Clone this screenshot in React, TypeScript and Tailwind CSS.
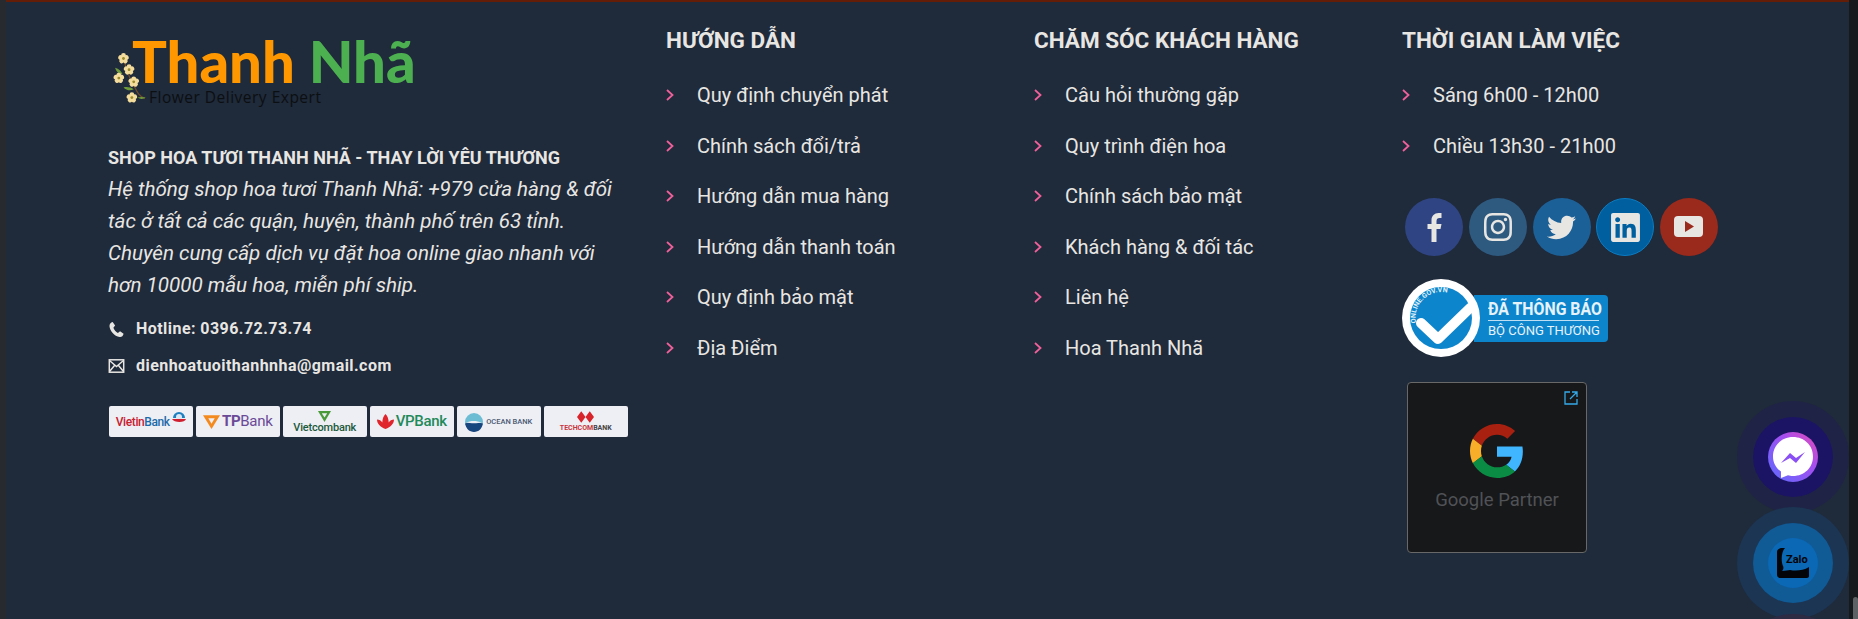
import React from 'react';
import { FaInstagram, FaTwitter, FaLinkedin } from 'react-icons/fa';

const guide = ['Quy định chuyển phát', 'Chính sách đổi/trả', 'Hướng dẫn mua hàng', 'Hướng dẫn thanh toán', 'Quy định bảo mật', 'Địa Điểm'];
const care = ['Câu hỏi thường gặp', 'Quy trình điện hoa', 'Chính sách bảo mật', 'Khách hàng & đối tác', 'Liên hệ', 'Hoa Thanh Nhã'];
const hours = ['Sáng 6h00 - 12h00', 'Chiều 13h30 - 21h00'];

function Chevron() {
  return (
    <svg width="8" height="12" viewBox="0 0 8 12" fill="none" className="shrink-0">
      <path d="M1 1l5.500 5L1 11" stroke="#f0609a" strokeWidth="1.800" />
    </svg>
  );
}

function LinkList({ items }: { items: string[] }) {
  return (
    <ul className="mt-[18px]">
      {items.map((item) => (
        <li key={item} className="flex items-center gap-[23px] h-[50.5px] text-[20px] text-[#e8e6e3]">
          <Chevron />
          <span>{item}</span>
        </li>
      ))}
    </ul>
  );
}

function Blossom({ x, y }: { x: number; y: number }) {
  return (
    <g transform={`translate(${x} ${y})`}>
      {[0, 72, 144, 216, 288].map((a) => (
        <circle key={a} cx="0" cy="-3.200" r="2.600" fill="#f3dc9c" transform={`rotate(${a})`} />
      ))}
      <circle r="1.500" fill="#9a8a2c" />
    </g>
  );
}

function Logo() {
  return (
    <div className="flex items-start h-[90px] pl-[4px]">
      <svg width="36" height="54" viewBox="0 0 36 58" className="mt-[24px] shrink-0">
        <path d="M10 6c4 8 5 18 10 26s5 14 14 18" stroke="#6e4a2a" strokeWidth="1.400" fill="none" />
        <path d="M2 17c4 1 7 4 8 7-4 0-7-3-8-7zM11 38c4-1 8 0 11 2-4 2-8 1-11-2zM26 49c3-1 6-1 9 0-3 2-6 2-9 0z" fill="#6f9a3a" />
        <Blossom x={11} y={7} />
        <Blossom x={17} y={19} />
        <Blossom x={6} y={28} />
        <Blossom x={22} y={32} />
        <Blossom x={20} y={49} />
      </svg>
      <div className="-ml-[16px] mt-[5px]">
        <div className="text-[58px] leading-[56px] font-black whitespace-nowrap [font-family:Lato,sans-serif]">
          <span className="text-[#ff9800]">Thanh</span> <span className="text-[#4caf50]">Nhã</span>
        </div>
        <div className="ml-[17px] text-[15.500px] leading-[16px] tracking-[0.5px] text-[#0c0f12] whitespace-nowrap [font-family:'Open_Sans',sans-serif]">
          Flower Delivery Expert
        </div>
      </div>
    </div>
  );
}

function BankCard({ children }: { children: React.ReactNode }) {
  return (
    <div className="w-[83.500px] h-[31px] rounded-[2px] bg-[#eeeef5] flex items-center justify-center gap-[2px] overflow-hidden whitespace-nowrap">
      {children}
    </div>
  );
}

function Banks() {
  return (
    <div className="flex gap-[3.500px] ml-[1px] mt-[28px]">
      <BankCard>
        <span className="text-[12px] tracking-[-0.4px] font-medium text-[#c8202f]">Vietin<span className="text-[#1c6aa8]">Bank</span></span>
        <svg width="14" height="16" viewBox="0 0 14 16" className="-mt-[6px]">
          <path d="M1 7a6 6 0 0 1 12 0z" fill="#1c7fc0" />
          <circle cx="7" cy="6" r="3" fill="#dbe8f3" />
          <path d="M0 8h14c-1 4-12 4-14 0z" fill="#d01f2e" />
        </svg>
      </BankCard>
      <BankCard>
        <svg width="17" height="15" viewBox="0 0 16 14">
          <path d="M0 1h16L8 14z" fill="#f48a1e" />
          <path d="M5 4h6l-3 5z" fill="#eeeef5" />
        </svg>
        <span className="text-[15px] tracking-[-0.3px] text-[#6a4a96]"><span className="font-bold">TP</span>Bank</span>
      </BankCard>
      <BankCard>
        <div className="flex flex-col items-center">
          <svg width="13" height="11" viewBox="0 0 12 10">
            <path d="M0 0h12L6 10z" fill="#4b9a3a" />
            <path d="M3.500 2h5L6 6z" fill="#eeeef5" />
          </svg>
          <span className="text-[11px] leading-[11px] tracking-[-0.2px] font-medium text-[#1d5a3a]">Vietcombank</span>
        </div>
      </BankCard>
      <BankCard>
        <svg width="17" height="15" viewBox="0 0 16 14">
          <path d="M8 14C3 12 0 9 0 5c2 0 4 1 5 3 0-3 1-6 3-8 2 2 3 5 3 8 1-2 3-3 5-3 0 4-3 7-8 9z" fill="#e0252c" />
        </svg>
        <span className="text-[15px] tracking-[-0.3px] font-medium text-[#1f8a5a]">VPBank</span>
      </BankCard>
      <BankCard>
        <svg width="18" height="20" viewBox="0 0 17 19">
          <circle cx="8.500" cy="9.500" r="8.500" fill="#6cbcd4" />
          <path d="M0 11c4-2 11-2 17 0-1 5-4 8-8.500 8S1 16 0 11z" fill="#17457e" />
          <path d="M1 10c4-2 10-2 15 0-4 1-11 1-15 0z" fill="#eeeef5" />
        </svg>
        <span className="text-[7.500px] font-medium text-[#4a5a72] ml-[1px]">OCEAN BANK</span>
      </BankCard>
      <BankCard>
        <div className="flex flex-col items-center">
          <svg width="17" height="12" viewBox="0 0 16 11">
            <path d="M4 0l4 5.500L4 11 0 5.500zM12 0l4 5.500-4 5.500-4-5.500z" fill="#d8232a" />
          </svg>
          <span className="text-[7px] leading-[10px] font-bold text-[#c8353c]">TECHCOM<span className="text-[#444]">BANK</span></span>
        </div>
      </BankCard>
    </div>
  );
}

function Socials() {
  return (
    <div className="flex gap-[5.750px] ml-[3px] mt-[27px] text-[#e8e6e3]">
      <div className="w-[58px] h-[58px] rounded-full bg-[#2f4583] flex items-center justify-center">
        <svg width="15" height="29" viewBox="0 0 14 29" fill="#e8e6e3">
          <path d="M4 29V16H0v-5h4V7c0-4 3-7 7-7h3v5h-2c-2 0-3 1-3 3v3h5l-1 5H9v13z" />
        </svg>
      </div>
      <div className="w-[58px] h-[58px] rounded-full bg-[#2e5a80] flex items-center justify-center"><FaInstagram size={32} /></div>
      <div className="w-[58px] h-[58px] rounded-full bg-[#1c6098] flex items-center justify-center"><FaTwitter size={29} /></div>
      <div className="w-[58px] h-[58px] rounded-full bg-[#005f9e] border border-[#0a7cc4] flex items-center justify-center"><FaLinkedin size={33} /></div>
      <div className="w-[58px] h-[58px] rounded-full bg-[#9a2a1b] flex items-center justify-center">
        <svg width="30" height="22" viewBox="0 0 30 22">
          <rect width="29" height="21" rx="4" fill="#e8e6e3" />
          <path d="M11 5l9 5.500-9 5.500z" fill="#9a2a1b" />
        </svg>
      </div>
    </div>
  );
}

function Notice() {
  return (
    <div className="flex items-center mt-[23px] h-[78px]">
      <div className="w-[78px] h-[78px] rounded-full bg-white shrink-0 z-10">
        <svg width="78" height="78" viewBox="0 0 78 78">
          <circle cx="39" cy="39" r="31" fill="#0d85cc" />
          <path id="noticeArc" d="M14 44A26 26 0 0 1 60 23" fill="none" />
          <text fontSize="7" fontWeight="700" fill="#dff0fa" fontFamily="Roboto, sans-serif">
            <textPath href="#noticeArc">ONLINE.GOV.VN</textPath>
          </text>
          <path d="M19 44l17 16 32-31" fill="none" stroke="white" strokeWidth="10" strokeLinejoin="round" strokeLinecap="round" />
        </svg>
      </div>
      <div className="-ml-[6px] w-[134px] h-[47px] rounded-r-[4px] bg-[#0d85cc] pl-[14px] pt-[3px] text-[#e6f3fb] [font-family:Roboto,sans-serif] whitespace-nowrap">
        <div className="w-[111px] border-b border-[#bfe0f4] h-[23px]">
          <div className="text-[18px] leading-[22px] font-bold origin-left scale-x-[0.88]">ĐÃ THÔNG BÁO</div>
        </div>
        <div className="text-[13px] leading-[18px] mt-[1px]">BỘ CÔNG THƯƠNG</div>
      </div>
    </div>
  );
}

function GooglePartner() {
  return (
    <div className="relative w-[180px] h-[171px] ml-[5px] mt-[25px] rounded-[4px] border border-[#686868] bg-[#17181a] flex flex-col items-center pt-[41px]">
      <svg width="14" height="14" viewBox="0 0 14 14" fill="none" stroke="#35a9e8" strokeWidth="1.300" className="absolute top-[8px] right-[8px]">
        <path d="M6 1H1v12h12V8M8 1h5v5M13 1L6 8" />
      </svg>
      <svg width="54" height="54" viewBox="0 0 48 48">
        <path fill="#a82010" d="M24 9.500c3.540 0 6.710 1.220 9.210 3.600l6.850-6.850C35.900 2.380 30.470 0 24 0 14.620 0 6.510 5.380 2.560 13.220l7.980 6.190C12.430 13.720 17.740 9.500 24 9.500z" />
        <path fill="#3fb6ff" d="M46.980 24.550c0-1.570-.15-3.090-.38-4.550H24v9.020h12.940c-.58 2.960-2.260 5.480-4.780 7.180l7.730 6c4.510-4.180 7.090-10.360 7.090-17.650z" />
        <path fill="#f9ae29" d="M10.530 28.590c-.48-1.450-.76-2.990-.76-4.590s.27-3.140.76-4.590l-7.980-6.190C.92 16.460 0 20.120 0 24c0 3.880.92 7.540 2.560 10.780l7.970-6.190z" />
        <path fill="#0b8c45" d="M24 48c6.480 0 11.930-2.130 15.890-5.810l-7.730-6c-2.150 1.450-4.920 2.300-8.160 2.300-6.260 0-11.570-4.220-13.470-9.910l-7.980 6.190C6.510 42.620 14.620 48 24 48z" />
      </svg>
      <div className="mt-[9px] text-[18.500px] leading-[26px] text-[#505256] [font-family:Roboto,sans-serif]">Google Partner</div>
    </div>
  );
}

function FloatingButtons() {
  return (
    <>
      <div className="absolute left-[1737px] top-[401px] w-[112px] h-[112px] rounded-full bg-[#1f2446] flex items-center justify-center">
        <div className="w-[80px] h-[80px] rounded-full bg-[#1b1464] flex items-center justify-center">
          <svg width="50" height="50" viewBox="0 0 50 50">
            <defs>
              <linearGradient id="messengerRing" x1="0" y1="1" x2="1" y2="0">
                <stop offset="0" stopColor="#5a6cff" />
                <stop offset="0.6" stopColor="#a24ff0" />
                <stop offset="1" stopColor="#e64bb4" />
              </linearGradient>
            </defs>
            <circle cx="25" cy="25" r="25" fill="url(#messengerRing)" />
            <path d="M25 5c11.500 0 20 8.500 20 19.500S36.500 44 25 44c-2 0-3.500-.2-5-.7L13 46v-6.500C8 36 5 31 5 24.500 5 13.500 13.500 5 25 5z" fill="white" />
            <path d="M13 31l9-10 6 5 9-6-9 11-6-5z" fill="#8a4ff5" />
          </svg>
        </div>
      </div>
      <div className="absolute left-[1737px] top-[507px] w-[112px] h-[112px] rounded-full bg-[#1b3553] flex items-center justify-center">
        <div className="w-[80px] h-[80px] rounded-full bg-[#105a96] flex items-center justify-center">
          <div className="relative w-[50px] h-[50px] rounded-full bg-[#0a68b5]">
            <svg width="32" height="30" viewBox="0 0 32 30" className="absolute left-[9px] top-[10px]">
              <path d="M5 0h3C4 4 4 14 6 18c1 2 0 4-1 5 4 0 6-1 8-1 5 1 13 1 19-3v9c0 1-1 2-2 2H3c-1 0-3-1-3-3V4c0-2 2-4 5-4z" fill="#020408" />
            </svg>
            <span className="absolute left-[18px] top-[15px] text-[11px] leading-[14px] font-bold text-[#020408] [font-family:Roboto,sans-serif]">Zalo</span>
          </div>
        </div>
      </div>
      <div className="absolute left-[1737px] top-[614px] w-[112px] h-[112px] rounded-full bg-[#2d2a44]" />
    </>
  );
}

export default function App() {
  return (
    <div className="relative flex w-[1858px] h-[619px] overflow-hidden bg-[#1f2a3a] [font-family:Roboto,sans-serif]">
      <div className="w-[6px] bg-[#272b2f] shrink-0" />

      <main className="flex-1 border-t-2 border-[#641e08] pl-[102px] pt-[26px] flex">
        <section className="w-[558px] shrink-0">
          <Logo />
          <h3 className="mt-[28px] text-[18px] leading-[24px] font-bold text-[#e8e6e3] whitespace-nowrap">SHOP HOA TƯƠI THANH NHÃ - THAY LỜI YÊU THƯƠNG</h3>
          <p className="mt-[3px] w-[505px] text-[20.600px] leading-[32px] italic text-[#e8e6e3]">
            Hệ thống shop hoa tươi Thanh Nhã: +979 cửa hàng & đối tác ở tất cả các quận, huyện, thành phố trên 63 tỉnh. Chuyên cung cấp dịch vụ đặt hoa online giao nhanh với hơn 10000 mẫu hoa, miễn phí ship.
          </p>
          <div className="mt-[16px] flex items-center gap-[11px] h-[24px] text-[16px] font-bold tracking-[0.45px] text-[#e8e6e3]">
            <svg width="17" height="17" viewBox="0 0 24 24" fill="#e8e6e3">
              <path d="M6.600 1.500l3.400 5-2.400 3c1 2.800 3.400 5.800 6.400 7.400l3-2.400 5 3.400c-.6 3-2.800 5-5.600 4.600C8.900 21.300 2.700 14 2.100 7.300 1.900 4.300 3.800 2.100 6.600 1.500z" />
            </svg>
            Hotline: 0396.72.73.74
          </div>
          <div className="mt-[13px] flex items-center gap-[11px] h-[24px] text-[16px] font-bold tracking-[0.45px] text-[#e8e6e3]">
            <svg width="17" height="14" viewBox="0 0 16 14" fill="none" stroke="#e8e6e3" strokeWidth="1.500">
              <rect x="0.800" y="0.800" width="14.400" height="12.400" />
              <path d="M1 1.500l7 6 7-6M1 12.500l5-6M15 12.500l-5-6" />
            </svg>
            dienhoatuoithanhnha@gmail.com
          </div>
          <Banks />
        </section>

        <section className="w-[368px] shrink-0">
          <h3 className="text-[22.500px] leading-[24px] font-bold text-[#e8e6e3]">HƯỚNG DẪN</h3>
          <LinkList items={guide} />
        </section>

        <section className="w-[368px] shrink-0">
          <h3 className="text-[22.500px] leading-[24px] font-bold text-[#e8e6e3]">CHĂM SÓC KHÁCH HÀNG</h3>
          <LinkList items={care} />
        </section>

        <section className="w-[368px] shrink-0">
          <h3 className="text-[22.500px] leading-[24px] font-bold text-[#e8e6e3]">THỜI GIAN LÀM VIỆC</h3>
          <LinkList items={hours} />
          <Socials />
          <Notice />
          <GooglePartner />
        </section>
      </main>

      <FloatingButtons />

      <div className="relative w-[9px] bg-[#171a1c] shrink-0 z-10">
        <div className="absolute left-[4px] top-[597px] w-[5px] h-[22px] rounded-t-[3px] bg-[#5e6264]" />
      </div>
    </div>
  );
}
